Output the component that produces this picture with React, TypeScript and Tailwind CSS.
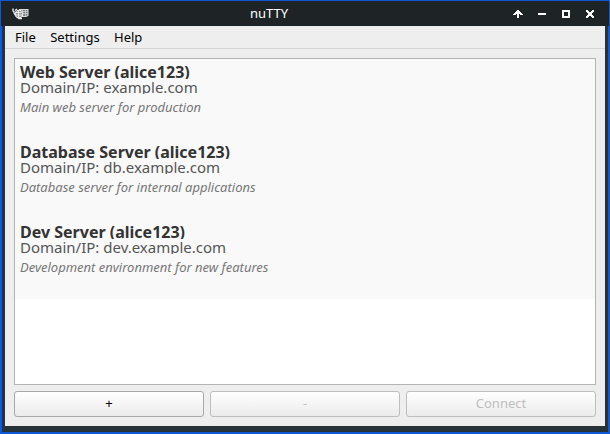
const servers = [
  { name: 'Web Server (alice123)', host: 'example.com', note: 'Main web server for production' },
  { name: 'Database Server (alice123)', host: 'db.example.com', note: 'Database server for internal applications' },
  { name: 'Dev Server (alice123)', host: 'dev.example.com', note: 'Development environment for new features' },
];

function AppIcon() {
  return (
    <svg width="17" height="12" viewBox="0 0 17 12" fill="none" stroke="#ededed" strokeWidth="1.1">
      <path d="M7 1.5h9v6l-2 1H9" fill="#777c7e" stroke="#d8dada" />
      <path d="M8 3.5h8M8 5.5h8M10.5 2v6M13.5 2v6" stroke="#c4c7c8" strokeWidth="0.9" />
      <path d="M1 0.5v2.5l1.5 1M3 2.5l2-1.5M1.5 4l2 3 1.5 2 2 1.5h3" strokeWidth="1.4" />
      <circle cx="7" cy="6" r="3.8" fill="#8e9293" />
      <path d="M4 4.5h5.5M3.5 7h6.5M6.5 2.5v7" />
    </svg>
  );
}

function TitleBar() {
  return (
    <header className="-mx-px flex h-[25px] items-center bg-[#1e2326]">
      <div className="flex w-[36px] shrink-0 pl-[11px]"><AppIcon /></div>
      <h1 className="flex-1 pb-px text-center text-[13px] leading-[24px] text-white">nuTTY</h1>
      <div className="flex w-[108px] shrink-0 items-center pl-[12px] text-white">
        <svg width="81" height="8" viewBox="0 0 81 8" fill="currentColor" shapeRendering="crispEdges">
          <path d="M4 0h2v1h1v1h1v1h1v1h1v1H7V4H6v4H4V4H3v1H0V4h1V3h1V2h1V1h1z" />
          <path d="M25 3h8v2h-8z" />
          <path fillRule="evenodd" d="M49 0h8v8h-8zM51 2v4h4V2z" />
          <path d="M73 0h2v1h1v1h2V1h1V0h2v2h-1v1h-1v2h1v1h1v2h-2V7h-1V6h-2v1h-1v1h-2V6h1V5h1V3h-1V2h-1z" />
        </svg>
      </div>
    </header>
  );
}

const buttonBase =
  'flex h-[26px] flex-1 items-center justify-center rounded-[3px] border bg-linear-to-b from-white to-[#ebebeb] text-[13px]';

export default function App() {
  return (
    <div className="flex h-[434px] w-[610px] flex-col border-x-2 border-t border-b-2 border-[#0f58d6] bg-[#263238] font-['Noto_Sans',sans-serif]">
      <TitleBar />
      <main className="mx-[3px] mb-[6px] flex min-h-0 flex-1 flex-col bg-[#eeeeee]">
        <nav className="flex h-[23px] shrink-0 gap-[14.4px] border-b border-[#d4d4d4] pl-[10px] text-[13px] leading-[22px] text-black">
          <span>File</span>
          <span>Settings</span>
          <span>Help</span>
        </nav>
        <ul className="mx-[9px] mt-[9px] h-[327px] shrink-0 border border-[#b4b4b4] bg-white">
          {servers.map((s) => (
            <li key={s.name} className="h-[80px] bg-[#f9f9f9] pt-[5px] pl-[5px]">
              <div className="h-[15px] overflow-hidden text-[16px] leading-[16px] font-bold text-[#333333]">{s.name}</div>
              <div className="h-[15px] overflow-hidden text-[15px] leading-[17px] text-[#555555]">Domain/IP: {s.host}</div>
              <div className="mt-[4px] text-[13px] leading-[18px] text-[#777777] italic">{s.note}</div>
            </li>
          ))}
        </ul>
        <div className="mx-[9px] mt-[6px] flex gap-[6px]">
          <button className={`${buttonBase} border-[#a8a8a8] text-black`}>+</button>
          <button disabled className={`${buttonBase} border-[#bebebe] text-[#bebebe]`}>-</button>
          <button disabled className={`${buttonBase} border-[#bebebe] text-[#bebebe]`}>Connect</button>
        </div>
      </main>
    </div>
  );
}
